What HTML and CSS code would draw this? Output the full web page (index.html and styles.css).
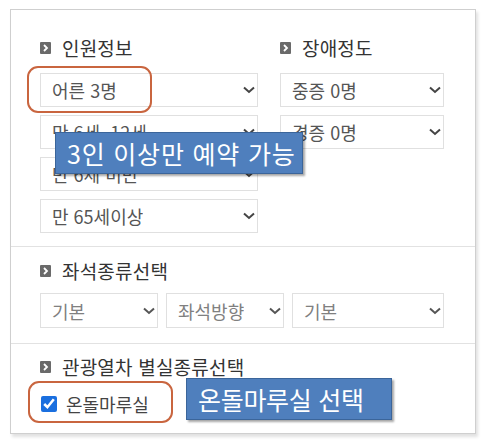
FILE: index.html
```html
<!DOCTYPE html>
<html lang="ko">
<head>
<meta charset="utf-8">
<link rel="stylesheet" href="styles.css">
</head>
<body>
<div class="panel">
  <section class="sec sec1">
    <div class="cols">
      <div class="col col-left">
        <h3 class="head"><span class="ico"><svg viewBox="0 0 11 12" width="11" height="12"><path d="M4 3 L7 6 L4 9" fill="none" stroke="#fff" stroke-width="1.8"/></svg></span>인원정보</h3>
        <div class="sel"><span>어른 3명</span><svg class="chev" viewBox="0 0 12 8" width="12" height="8"><path d="M1 1.5 L6 6 L11 1.5" fill="none" stroke="#444" stroke-width="2"/></svg></div>
        <div class="sel"><span>만 6세~12세</span><svg class="chev" viewBox="0 0 12 8" width="12" height="8"><path d="M1 1.5 L6 6 L11 1.5" fill="none" stroke="#444" stroke-width="2"/></svg></div>
        <div class="sel"><span>만 6세 미만</span><svg class="chev" viewBox="0 0 12 8" width="12" height="8"><path d="M1 1.5 L6 6 L11 1.5" fill="none" stroke="#444" stroke-width="2"/></svg></div>
        <div class="sel"><span>만 65세이상</span><svg class="chev" viewBox="0 0 12 8" width="12" height="8"><path d="M1 1.5 L6 6 L11 1.5" fill="none" stroke="#444" stroke-width="2"/></svg></div>
      </div>
      <div class="col col-right">
        <h3 class="head"><span class="ico"><svg viewBox="0 0 11 12" width="11" height="12"><path d="M4 3 L7 6 L4 9" fill="none" stroke="#fff" stroke-width="1.8"/></svg></span>장애정도</h3>
        <div class="sel"><span>중증 0명</span><svg class="chev" viewBox="0 0 12 8" width="12" height="8"><path d="M1 1.5 L6 6 L11 1.5" fill="none" stroke="#444" stroke-width="2"/></svg></div>
        <div class="sel"><span>경증 0명</span><svg class="chev" viewBox="0 0 12 8" width="12" height="8"><path d="M1 1.5 L6 6 L11 1.5" fill="none" stroke="#444" stroke-width="2"/></svg></div>
      </div>
    </div>
  </section>
  <section class="sec sec2">
    <h3 class="head"><span class="ico"><svg viewBox="0 0 11 12" width="11" height="12"><path d="M4 3 L7 6 L4 9" fill="none" stroke="#fff" stroke-width="1.8"/></svg></span>좌석종류선택</h3>
    <div class="row3">
      <div class="sel light w118"><span>기본</span><svg class="chev" viewBox="0 0 12 8" width="12" height="8"><path d="M1 1.5 L6 6 L11 1.5" fill="none" stroke="#555" stroke-width="2"/></svg></div>
      <div class="sel light w118"><span>좌석방향</span><svg class="chev" viewBox="0 0 12 8" width="12" height="8"><path d="M1 1.5 L6 6 L11 1.5" fill="none" stroke="#555" stroke-width="2"/></svg></div>
      <div class="sel light w152"><span>기본</span><svg class="chev" viewBox="0 0 12 8" width="12" height="8"><path d="M1 1.5 L6 6 L11 1.5" fill="none" stroke="#555" stroke-width="2"/></svg></div>
    </div>
  </section>
  <section class="sec sec3">
    <h3 class="head"><span class="ico"><svg viewBox="0 0 11 12" width="11" height="12"><path d="M4 3 L7 6 L4 9" fill="none" stroke="#fff" stroke-width="1.8"/></svg></span>관광열차 별실종류선택</h3>
    <label class="chk"><input type="checkbox" checked><span>온돌마루실</span></label>
  </section>
</div>

<div class="mark mark1"></div>
<div class="mark mark2"></div>
<div class="callout callout1">3인 이상만 예약 가능</div>
<div class="callout callout2">온돌마루실 선택</div>
</body>
</html>
```

FILE: styles.css
```css
html, body {
  margin: 0;
  padding: 0;
  background: #fff;
}
body {
  position: relative;
  width: 485px;
  height: 448px;
  overflow: hidden;
  font-family: "Noto Sans CJK KR", "Noto Sans", sans-serif;
}
.panel {
  box-sizing: border-box;
  margin: 9px 0 0 10px;
  width: 466px;
  height: 425px;
  border: 1px solid #cfcfcf;
  box-shadow: 2px 3px 3px rgba(0, 0, 0, 0.12);
  background: #fff;
}
.sec {
  padding: 0 29px;
}
.sec + .sec {
  border-top: 1px solid #e2e2e2;
}
.sec1 {
  padding-top: 26px;
  padding-bottom: 13px;
}
.sec2 {
  padding-top: 12px;
  padding-bottom: 15px;
}
.sec3 {
  padding-top: 11px;
}
.cols {
  display: flex;
  gap: 22px;
}
.col-left { width: 218px; }
.col-right { width: 164px; }
.head {
  margin: 0;
  height: 24px;
  display: flex;
  align-items: center;
  font-size: 19px;
  font-weight: normal;
  color: #333;
  line-height: 24px;
  letter-spacing: 0.2px;
  white-space: nowrap;
}
.ico {
  display: inline-flex;
  flex: none;
  width: 11px;
  height: 12px;
  background: #6a6a6a;
  border-radius: 1px;
  margin-right: 11px;
}
.ico svg { display: block; }
.sec1 .head { margin-bottom: 13px; }
.sec2 .head { margin-bottom: 10px; }
.sel {
  box-sizing: border-box;
  height: 34px;
  border: 1px solid #e0e0e0;
  display: flex;
  align-items: center;
  justify-content: space-between;
  padding: 0 2px 0 11px;
  font-size: 18px;
  color: #555;
  background: #fff;
}
.col .sel + .sel { margin-top: 8px; }
.sel span {
  white-space: nowrap;
  overflow: hidden;
}
.chev { flex: none; display: block; }
.row3 {
  display: flex;
  gap: 8px;
}
.sel.light {
  height: 35px;
  color: #808080;
}
.w118 { width: 118px; }
.w152 { width: 152px; }
.chk {
  margin-top: 13px;
  height: 24px;
  display: flex;
  align-items: center;
  font-size: 18px;
  color: #444;
}
.chk input {
  width: 16px;
  height: 16px;
  margin: 0 9px 0 1px;
  accent-color: #1a6fdf;
}
.mark {
  position: absolute;
  box-sizing: border-box;
  border: 2.5px solid #c9653f;
  border-radius: 11px;
}
.mark1 {
  left: 27px;
  top: 66px;
  width: 125px;
  height: 47px;
}
.mark2 {
  left: 28px;
  top: 381px;
  width: 145px;
  height: 42px;
}
.callout {
  position: absolute;
  box-sizing: border-box;
  background: #4f7fbd;
  border: 1px solid #3b659a;
  box-shadow: 2px 2px 2px rgba(0, 0, 0, 0.35);
  color: #fff;
  display: flex;
  align-items: center;
  white-space: nowrap;
  padding-left: 11px;
}
.callout1 {
  left: 55px;
  top: 132px;
  width: 248px;
  height: 42px;
  font-size: 25px;
  letter-spacing: 0.8px;
}
.callout2 {
  left: 186px;
  top: 378px;
  width: 206px;
  height: 42px;
  font-size: 25px;
  letter-spacing: -0.3px;
}
```
